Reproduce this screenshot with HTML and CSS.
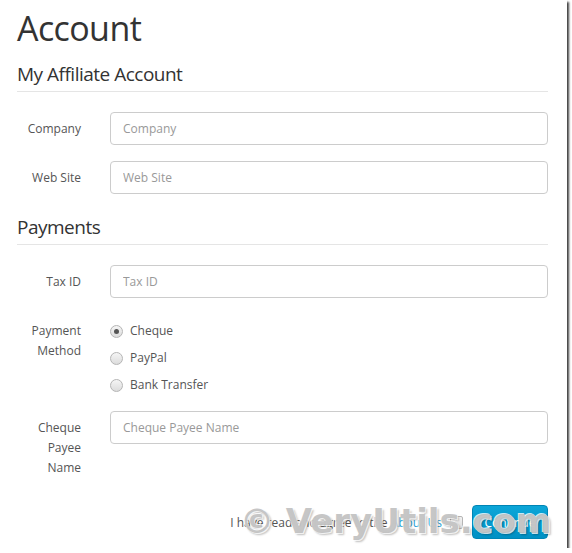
FILE: index.html
```html
<!DOCTYPE html>
<html lang="en">
<head>
    <meta charset="UTF-8">
    <meta name="viewport" content="width=device-width, initial-scale=1.0">
    <title>Account</title>
    <link rel="stylesheet" href="styles.css">
</head>
<body>
  <div class="page">
    <h1>Account</h1>

    <h3 class="section">My Affiliate Account</h3>
    <div class="row">
      <label class="lbl">Company</label>
      <input class="field" type="text" placeholder="Company">
    </div>
    <div class="row">
      <label class="lbl">Web Site</label>
      <input class="field" type="text" placeholder="Web Site">
    </div>

    <h3 class="section">Payments</h3>
    <div class="row">
      <label class="lbl">Tax ID</label>
      <input class="field" type="text" placeholder="Tax ID">
    </div>
    <div class="row">
      <label class="lbl">Payment Method</label>
      <div class="radios">
        <div class="radio"><span class="dot checked"></span>Cheque</div>
        <div class="radio"><span class="dot"></span>PayPal</div>
        <div class="radio"><span class="dot"></span>Bank Transfer</div>
      </div>
    </div>
    <div class="row">
      <label class="lbl">Cheque Payee Name</label>
      <input class="field" type="text" placeholder="Cheque Payee Name">
    </div>

    <div class="footer">
      <span class="agree">I have read and agree to the <a href="#">About Us</a></span>
      <span class="check"></span>
      <button class="btn">Continue</button>
    </div>

    <div class="watermark">© VeryUtils.com</div>
  </div>
</body>
</html>
```

FILE: styles.css
```css
* {
  margin: 0;
  padding: 0;
  box-sizing: border-box;
}

body {
  background: #fff;
  font-family: "Open Sans", "Liberation Sans", sans-serif;
  font-size: 12px;
  color: #555;
}

.page {
  position: relative;
  width: 567px;
  height: 548px;
  padding: 8px 19px 0 17px;
  background: #fff;
  box-shadow: 2px 2px 2px rgba(0, 0, 0, 0.75);
}

h1 {
  font-size: 34px;
  font-weight: 400;
  line-height: 40px;
  letter-spacing: -0.6px;
  color: #333;
}

.section {
  font-size: 19px;
  font-weight: 400;
  line-height: 24px;
  letter-spacing: -0.5px;
  color: #333;
  margin-top: 14px;
  padding-bottom: 5px;
  border-bottom: 1px solid #e5e5e5;
  margin-bottom: 20px;
}

.row + .section {
  margin-top: 21px;
}

.row {
  display: flex;
  align-items: flex-start;
  gap: 29px;
  margin-bottom: 16px;
}

.lbl {
  width: 64px;
  flex: none;
  text-align: right;
  padding-top: 7px;
  line-height: 20px;
  color: #555;
}

.field {
  flex: 1;
  height: 33px;
  border: 1px solid #ccc;
  border-radius: 4px;
  padding: 0 12px;
  font-family: inherit;
  font-size: 12px;
  color: #555;
  outline: none;
}

.field::placeholder {
  color: #999;
}

.radios {
  padding-top: 7px;
}

.radio {
  display: flex;
  align-items: center;
  line-height: 20px;
  margin-bottom: 7px;
  color: #555;
}

.radio:last-child {
  margin-bottom: 0;
}

.dot {
  width: 13px;
  height: 13px;
  border: 1px solid #b5b5b5;
  border-radius: 50%;
  background: linear-gradient(#f5f5f5, #dcdcdc);
  margin-right: 7px;
  position: relative;
}

.dot.checked::after {
  content: "";
  position: absolute;
  left: 3px;
  top: 3px;
  width: 5px;
  height: 5px;
  border-radius: 50%;
  background: #555;
}

.footer {
  display: flex;
  justify-content: flex-end;
  align-items: center;
  margin-top: 27px;
}

.agree {
  color: #555;
}

.agree a {
  color: #2a9fd6;
  text-decoration: none;
}

.check {
  width: 13px;
  height: 13px;
  border: 1px solid #b5b5b5;
  border-radius: 2px;
  background: linear-gradient(#f5f5f5, #dcdcdc);
  margin: 0 9px 0 8px;
}

.btn {
  width: 76px;
  height: 34px;
  border: 1px solid #0085b5;
  border-radius: 4px;
  background: linear-gradient(#0ca6d8, #0090c4);
  color: #fff;
  font-family: inherit;
  font-size: 12px;
}

.watermark {
  position: absolute;
  left: 240px;
  top: 501px;
  font-family: "DejaVu Sans", sans-serif;
  font-weight: 700;
  font-size: 34px;
  line-height: 40px;
  color: rgba(180, 180, 180, 0.75);
  text-shadow: 1px 1px 0 rgba(255, 255, 255, 0.8), -1px -1px 0 rgba(255, 255, 255, 0.8), 2px 2px 2px rgba(0, 0, 0, 0.25);
  pointer-events: none;
}
```
